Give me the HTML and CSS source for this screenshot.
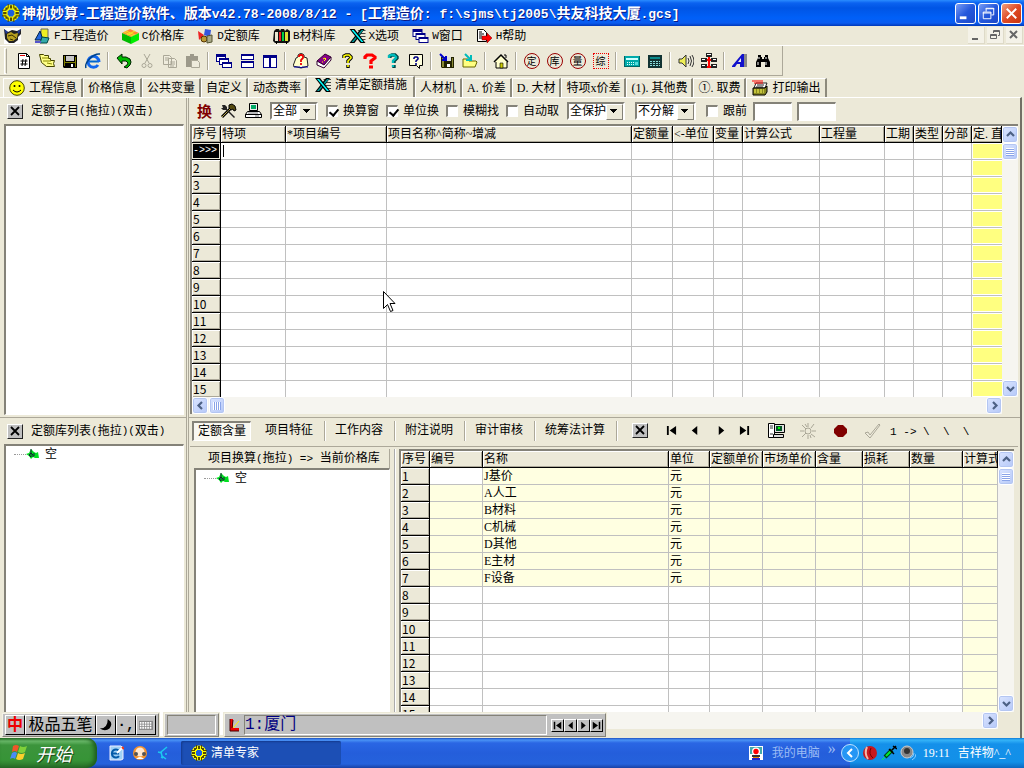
FILE: index.html
```html
<!DOCTYPE html>
<html lang="zh-CN">
<head>
<meta charset="utf-8">
<title>神机妙算-工程造价软件</title>
<link rel="stylesheet" href="styles.css">
</head>
<body>
<svg class="defs" aria-hidden="true">
  <symbol id="logo" viewBox="0 0 16 16"><circle cx="8" cy="8" r="7.500" fill="#ff0"/><path d="M5 0h1v4h-1zM10 0h1v4h-1zM5 12h1v4h-1zM10 12h1v4h-1zM0 5h4v1H0zM0 10h4v1H0zM12 5h4v1h-4zM12 10h4v1h-4zM7 1h2v3H7zM7 12h2v3H7zM1 7h3v2H1zM12 7h3v2h-3zM3 3h2v2H3zM11 3h2v2h-2zM3 11h2v2H3zM11 11h2v2h-2z" fill="#554b00"/><path d="M6 5h4v1h1v4h-1v1H6v-1H5V6h1z" fill="#1a5fe0"/></symbol>
  <symbol id="excel" viewBox="0 0 16 16"><path d="M8 2h8v1H9zM10 5h6v1h-6zM9 8h7v1H9zM10 11h6v1h-6z" fill="#444"/><path d="M11 1h4L5 15H0z" fill="#000"/><path d="M12 2h2L4 14H2z" fill="#099"/><path d="M0 1h5l11 14h-5z" fill="#000"/><path d="M2 2h2l10 12h-2z" fill="#0ff"/></symbol>
  <symbol id="cascade" viewBox="0 0 16 16"><path d="M0 1h10v8H0z" fill="#008"/><path d="M1 4h8v4H1z" fill="#fff"/><path d="M3 5h10v7H3z" fill="#008"/><path d="M4 7h8v4H4z" fill="#fff"/><path d="M6 9h10v6H6z" fill="#008"/><path d="M7 11h8v3H7z" fill="#fff"/></symbol>
  <symbol id="disk" viewBox="0 0 16 16"><path d="M1 2h14v13H2l-1-1z" fill="#000"/><path d="M2 3h1v10H2zM13 4h1v10h-1zM3 9h10v1H3z" fill="#808000"/><path d="M4 3h8v5H4z" fill="#c8c8c8"/><path d="M9 11h2v3H9z" fill="#fff"/></symbol>
  <symbol id="up" viewBox="0 0 9 9"><path d="M1 6l3.500-3.500L8 6" fill="none" stroke="#4d6185" stroke-width="2.200"/></symbol>
  <symbol id="tree" viewBox="0 0 13 10"><path d="M0 5l3-1 2-4 3 3 2 1 2-1 1 6H9L7 8 5 10 3 7z" fill="#00e020"/><path d="M5 0v4L3 6l2 2V4l2 2v2M8 4v3" stroke="#123" fill="none"/></symbol>
  <symbol id="prev" viewBox="0 0 12 12"><path d="M9 1v10L3 6z"/></symbol>
  <symbol id="first" viewBox="0 0 12 12"><path d="M1 1h2v10H1zM11 1v10L4 6z"/></symbol>
  <symbol id="cross" viewBox="0 0 12 11"><path d="M2 1l8 8M10 1L2 9" stroke="#000" stroke-width="1.800"/></symbol>
</svg>

<header class="titlebar">
  <svg class="i18"><use href="#logo"/></svg>
  <h1>神机妙算<span>-</span>工程造价软件、版本<span>v42.78-2008/8/12 - [</span>工程造价<span>: f:\sjms\tj2005\</span>共友科技大厦<span>.gcs]</span></h1>
  <button class="win" aria-label="最小化"><svg viewBox="0 0 20 20"><path d="M4 13h7v3H4z" fill="#fff"/></svg></button>
  <button class="win" aria-label="还原"><svg viewBox="0 0 20 20" fill="none" stroke="#fff"><path d="M7.500 8V4.500h8v7H13M7 5h9M4.500 8.500h8v7h-8zM4 9.500h9"/></svg></button>
  <button class="win close" aria-label="关闭"><svg viewBox="0 0 20 20"><path d="M5 5l10 10M15 5L5 15" stroke="#fff" stroke-width="2"/></svg></button>
</header>

<nav class="menubar">
  <svg class="i17" viewBox="0 0 17 16"><path d="M0 0h17v16H0z" fill="#fff"/><path d="M0 1l4 3 4-2 5 1 4-2v5l-3 3v3l-4 3H5l-4-4z" fill="#222"/><path d="M3 6l4-2 3 2 4-1-1 5-4 3H5l-2-3z" fill="#b8a020"/><path d="M4 8l4-1 4 3M6 11l3 1" stroke="#332b00" fill="none"/><path d="M0 1l4 3-2 2zM17 1l-4 3 2 2z" fill="#223a9a"/></svg>
  <button><svg class="i17" viewBox="0 0 17 16"><path d="M7 1h7v9H7z" fill="#ee2" stroke="#666"/><path d="M1 12L6 3l3 9z" fill="#26d" stroke="#024"/><path d="M8 9l7 1-2 5H6z" fill="#3aa" stroke="#044"/><path d="M1 13h6v2H1z" fill="#55c"/></svg><span class="l">F</span>工程造价</button>
  <button><svg class="i17" viewBox="0 0 17 16"><path d="M0 5l8-4 9 4-8 4z" fill="#f83"/><path d="M4 3l9 4M2 4l9 4M13 3L5 7" stroke="#ee2"/><path d="M0 5l9 4v7l-9-4z" fill="#0b0"/><path d="M17 5L9 9v7l8-4z" fill="#0e0"/></svg><span class="l">C</span>价格库</button>
  <button><svg class="i17" viewBox="0 0 17 16"><path d="M1 3l6 4-5 5z" fill="#e22"/><path d="M8 1l6 1-1 7-6-2z" fill="#35d"/><circle cx="7" cy="11" r="3" fill="#b93" stroke="#530"/><path d="M10 8l5-1v7l-5 1z" fill="#aa8" stroke="#553"/></svg><span class="l">D</span>定额库</button>
  <button><svg class="i17" viewBox="0 0 17 16"><path d="M1 3l2-2h3l1 2 1-2h3l1 2 2-2 3 2v10l-2 2H2l-2-2z" fill="#111"/><path d="M2 4h3v9H2z" fill="#e8e8d0"/><path d="M6 4h2v9H6z" fill="#e22"/><path d="M9 4h2v9H9z" fill="#0c4"/><path d="M12 4h3v9h-3z" fill="#dd3"/><path d="M3 13h1v3H3zM13 13h1v3h-1z"/></svg><span class="l">B</span>材料库</button>
  <button><svg class="i17"><use href="#excel"/></svg><span class="l">X</span>选项</button>
  <button><svg class="i17"><use href="#cascade"/></svg><span class="l">W</span>窗口</button>
  <button><svg class="i17" viewBox="0 0 17 16"><path d="M1.500 1.500h6l3 3v9h-9z" fill="#fff" stroke="#000"/><path d="M3 4h3M3 6h5M3 8h3M3 10h3" stroke="#000"/><path d="M6 8h5V5l5 5-5 5v-3H6z" fill="#f00" stroke="#700" stroke-width=".5"/></svg><span class="l">H</span>帮助</button>
  <span class="grow"></span>
  <button class="mdi" aria-label="最小化子窗口"><svg viewBox="0 0 16 16"><path d="M4 11h6v2H4z" fill="#666"/></svg></button>
  <button class="mdi" aria-label="还原子窗口"><svg viewBox="0 0 16 16" fill="none" stroke="#666"><path d="M6.500 6V3.500h6v5H11M6 4.500h7M3.500 7.500h6v4h-6zM3 8.500h7"/></svg></button>
  <button class="mdi" aria-label="关闭子窗口"><svg viewBox="0 0 16 16"><path d="M4 4l7 7M11 4l-7 7" stroke="#666" stroke-width="2"/></svg></button>
</nav>

<div class="toolrow"><div class="toolbar" role="toolbar">
  <span class="grip"></span>
  <button aria-label="新建"><svg viewBox="0 0 16 16"><path d="M2.500.5h8l3 3v12h-11z" fill="#fff" stroke="#000"/><path d="M10.500.5v3h3" fill="none" stroke="#000"/><path d="M4 2.500h5" stroke="#d00"/><path d="M7 6L6 13M10 6L9 13M4.500 8h7M4.500 11h7" stroke="#000"/></svg></button>
  <button aria-label="打开"><svg viewBox="0 0 16 16"><path d="M.5 1.500h4l1 1h4v3h2v2h4l-1 3 1 3h-8l-5-4z" fill="#ff8" stroke="#440"/><path d="M3 5h7M4 8h8M8 10l5 1" stroke="#880" fill="none"/></svg></button>
  <button aria-label="保存"><svg><use href="#disk"/></svg></button>
  <button aria-label="浏览"><svg viewBox="0 0 16 16"><path d="M14 8.500H4" stroke="#06c" stroke-width="2"/><path d="M14 9A5.500 5.500 0 1 0 13 12" fill="none" stroke="#16e" stroke-width="3"/><path d="M1 15C-1 10 8 0 15 1" fill="none" stroke="#048" stroke-width="1.500"/></svg></button>
  <i class="sep"></i>
  <button aria-label="撤销"><svg viewBox="0 0 16 16"><path d="M1 5l5-4v3h4l4 2 1 3-1 3-3 3-3-1 3-2 1-2-2-2H6v3z" fill="#0b0" stroke="#020"/></svg></button>
  <button aria-label="剪切"><svg viewBox="0 0 16 16" fill="none" stroke="#aaa797"><path d="M5 1l5 9M11 1L6 10"/><circle cx="5" cy="12.500" r="2"/><circle cx="11" cy="12.500" r="2"/></svg></button>
  <button aria-label="复制"><svg viewBox="0 0 16 16" fill="#efecdd" stroke="#aaa797"><path d="M1.500 2.500h6l2 2v7h-8zM6.500 5.500h6l2 2v7h-8z"/><path d="M3 5h4M3 7h3M8 9h5M8 11h5M8 13h4"/></svg></button>
  <button aria-label="粘贴"><svg viewBox="0 0 16 16"><path d="M1 3h4V1h4v2h4v11H1z" fill="#9c998a"/><path d="M6.500 7.500h6l2 2v5h-8z" fill="#eeebdc" stroke="#aaa797"/></svg></button>
  <i class="sep"></i>
  <button aria-label="层叠"><svg><use href="#cascade"/></svg></button>
  <button aria-label="横向平铺"><svg viewBox="0 0 16 16"><path d="M2 1h13v6H2zM2 8h13v7H2z" fill="#008"/><path d="M3 3h11v3H3zM3 10h11v4H3z" fill="#fff"/></svg></button>
  <button aria-label="纵向平铺"><svg viewBox="0 0 16 16"><path d="M1 2h14v13H1z" fill="#008"/><path d="M2 5h5v9H2zM9 5h5v9H9z" fill="#fff"/></svg></button>
  <i class="sep"></i>
  <button aria-label="帮助目录"><svg viewBox="0 0 16 16"><path d="M3 5l2-1v-2l3-2 3 2v2l3 1 1 8-3 1-4 1-4-1-4-1z" fill="#ffc" stroke="#222"/><path d="M6 4V3l1-1h2l1 1v2L8 7v2M8 10v2" fill="none" stroke="#e00" stroke-width="1.800"/><path d="M1 14h6l1 1 1-1h6" stroke="#00a" fill="none"/></svg></button>
  <button aria-label="手册"><svg viewBox="0 0 16 16"><path d="M1 8l8-7 6 3-7 8z" fill="#808" stroke="#303"/><path d="M1 8v4l7 3 7-8V4l-7 8z" fill="#fff" stroke="#303"/><path d="M7 6l2-1 1 1-2 2M6 9h1" stroke="#ff0" fill="none"/></svg></button>
  <button aria-label="提示"><svg viewBox="0 0 16 16" fill="none"><path d="M5 5V3l2-1h3l2 2v1L9 8v2M9 12v3" stroke="#000" stroke-width="3.400"/><path d="M5 5V3l2-1h3l2 2v1L9 8v2M9 12v2" stroke="#ff0" stroke-width="1.600"/></svg></button>
  <button aria-label="问答"><svg viewBox="0 0 16 16" fill="none" stroke="#f00"><path d="M3 6V4l2-2h5l3 2v1l-4 3v3" stroke-width="3.200"/><path d="M7 14h4" stroke-width="3"/></svg></button>
  <button aria-label="在线帮助"><svg viewBox="0 0 16 16" fill="none"><path d="M5 5V3l2-1h3l2 2v1L9 8v2M9 12v3" stroke="#044" stroke-width="3.400"/><path d="M4 5V3l2-1h3l2 2v1L8 8v2M8 12v2" stroke="#0bb" stroke-width="2.400"/></svg></button>
  <button aria-label="这是什么"><svg viewBox="0 0 16 16"><path d="M1.500 1.500h13v11h-3v3l-3-3h-7z" fill="#ffd" stroke="#000"/><path d="M6 6V5l1-1h2l1 1v1L8 8v1M8 10v2" fill="none" stroke="#008" stroke-width="1.600"/></svg></button>
  <i class="sep"></i>
  <button aria-label="存盘"><svg viewBox="0 0 16 16"><path d="M2 4h13v11H3l-1-1z" fill="#222200"/><path d="M3 5h2v9H3zM13 5h1v9h-1z" fill="#883"/><path d="M6 4h6v4H6z" fill="#ddd"/><path d="M8 11h3v3H8z" fill="#fff"/><path d="M1 1l5 5M7 3v4H3" stroke="#00c" stroke-width="2" fill="none"/></svg></button>
  <button aria-label="读入"><svg viewBox="0 0 16 16"><path d="M1 6h5l1 2h7l1 1-2 5H1z" fill="#ffff80" stroke="#660"/><path d="M3 1l5 5M9 2v5H4" stroke="#0bb" stroke-width="2" fill="none"/></svg></button>
  <i class="sep"></i>
  <button aria-label="主页"><svg viewBox="0 0 16 16"><path d="M3 8v7h11V8" fill="#ffc" stroke="#000"/><path d="M1 9l7-7 7 7" fill="#ffc" stroke="#000" stroke-width="1.500"/><path d="M11 2h2v3" stroke="#000" fill="none"/><path d="M7 10h3v5H7z" fill="#cc0" stroke="#000" stroke-width=".6"/></svg></button>
  <i class="sep"></i>
  <button><b class="seal">定</b></button>
  <button><b class="seal">库</b></button>
  <button><b class="seal">量</b></button>
  <button><b class="seal dotted">综</b></button>
  <i class="sep"></i>
  <button aria-label="卡片"><svg viewBox="0 0 16 16"><path d="M0 3h16v11H0z" fill="#066"/><path d="M1 3h14v10H1z" fill="#0aa"/><path d="M2 5h12v2H2z" fill="#cff"/><path d="M3 9.500h7M3 11.500h7" stroke="#dff" stroke-dasharray="1 1"/><path d="M11 9h3v3h-3z" fill="#5dd"/></svg></button>
  <button aria-label="计算器"><svg viewBox="0 0 16 16"><path d="M1 2h14v13H1z" fill="#133"/><path d="M3 4h10v2H3z" fill="#0a8a8a"/><path d="M3 8.500h10M3 10.500h10M3 12.500h10" stroke="#8dd" stroke-dasharray="2 1"/></svg></button>
  <i class="sep"></i>
  <button aria-label="声音"><svg viewBox="0 0 16 16"><path d="M1 6h3l4-4v12l-4-4H1z" fill="#ee5" stroke="#333"/><path d="M10 5q2 3 0 6M12 3q3 5 0 10M14 2q4 6 0 12" fill="none" stroke="#333"/></svg></button>
  <button aria-label="网络"><svg viewBox="0 0 16 16"><path d="M5 0h6v4H5zM0 5h6v4H0zM10 5h6v4h-6zM0 11h6v4H0zM10 11h6v4h-6z" fill="#222"/><path d="M6 1h4v1H6zM1 6h3v1H1zM12 6h3v1h-3zM1 12h3v1H1zM12 12h3v1h-3z" fill="#fff"/><path d="M8 4v11M6 7h4M6 14h4" stroke="#f00" stroke-width="2"/></svg></button>
  <i class="sep"></i>
  <button aria-label="字体"><svg viewBox="0 0 16 16"><path d="M12 1h3v13h-3z" fill="#888"/><path d="M10 1h2v13H8v-3H5l-2 3H0v-1z" fill="#11c"/><path d="M9 5v4H6z" fill="#eee"/></svg></button>
  <button aria-label="查找"><svg viewBox="0 0 16 16"><path d="M3 2h3v2h1v2h2V4h1V2h3v3l2 4v5h-5V9H6v5H1V9l2-4z"/><path d="M3 9v3M11 9v3M4 4v2M11 4v2" stroke="#fff"/></svg></button>
</div></div>

<nav class="tabs">
  <button><svg class="i16" viewBox="0 0 16 16"><circle cx="8" cy="8" r="7.300" fill="#ff0" stroke="#440"/><circle cx="5.500" cy="6" r="1"/><circle cx="10.500" cy="6" r="1"/><path d="M4 10q4 4 8 0" fill="none" stroke="#000"/></svg>工程信息</button>
  <button>价格信息</button>
  <button>公共变量</button>
  <button>自定义</button>
  <button>动态费率</button>
  <button class="on"><svg class="i16"><use href="#excel"/></svg>清单定额措施</button>
  <button>人材机</button>
  <button>A. 价差</button>
  <button>D. 大材</button>
  <button>特项x价差</button>
  <button>(1). 其他费</button>
  <button>①. 取费</button>
  <button><svg class="i16" viewBox="0 0 16 16"><path d="M4 3h11l-2 5H2z" fill="#fff" stroke="#222"/><path d="M0 1h11M2 3h9" stroke="#f00"/><path d="M5 5h7M4 7h7" stroke="#222"/><path d="M1 8h12l2-2v6l-2 3H1z" fill="#882" stroke="#000"/><path d="M2 10h10M2 12h10" stroke="#ff5" stroke-dasharray="2 1"/></svg>打印输出</button>
</nav>

<main class="work">
  <section class="side top">
    <div class="cap"><button class="x" aria-label="关闭"><svg><use href="#cross"/></svg></button>定额子目<span class="l">(</span>拖拉<span class="l">)(</span>双击<span class="l">)</span></div>
    <div class="box"></div>
  </section>

  <section class="content top">
    <form class="opts">
      <b class="swap">换</b>
      <svg class="i17" viewBox="0 0 17 16"><path d="M9 2l3-1 3 2 1 4-2 1-1-2-2 1-2-2z" fill="#554a10" stroke="#000"/><path d="M10 6L2 14" stroke="#000" stroke-width="3"/><path d="M10 6L2 14" stroke="#b9a84a"/><path d="M2 2l3 0 2 2v2l8 8-1 1-8-8H3L1 5l2 0z" fill="#222"/></svg>
      <svg class="i17" viewBox="0 0 17 16"><path d="M4.500.5h8v7h-8z" fill="#eee" stroke="#000"/><path d="M6 2h5v4H6z" fill="#0a6"/><path d="M2.500 8.500h12l2 3h-16zM.5 11.500h16v3H.5z" fill="#fff" stroke="#000"/><path d="M3 10h10M10 13h4" stroke="#777"/></svg>
      <span class="combo c1"><select aria-label="范围"><option>全部</option></select></span>
      <label><input type="checkbox" checked>换算窗</label>
      <label><input type="checkbox" checked>单位换</label>
      <label><input type="checkbox">模糊找</label>
      <label><input type="checkbox">自动取</label>
      <span class="combo c2"><select aria-label="保护"><option>全保护</option></select></span>
      <span class="combo c2"><select aria-label="分解"><option>不分解</option></select></span>
      <label><input type="checkbox">跟前</label>
      <input class="txt" type="text" aria-label="起"><input class="txt" type="text" aria-label="止">
    </form>
    <div class="grid">
      <div class="view">
        <table class="t1">
          <colgroup><col class="w29"><col class="w65"><col class="w101"><col><col class="w41"><col class="w41"><col class="w29"><col class="w77"><col class="w65"><col class="w29"><col class="w29"><col class="w29"><col class="w30"></colgroup>
          <thead><tr><th>序号<th>特项<th>*项目编号<th>项目名称^简称~增减<th>定额量<th>&lt;-单位<th>变量<th>计算公式<th>工程量<th>工期<th>类型<th>分部<th>定. 直</tr></thead>
          <tbody>
          <tr><th class="cur">-&gt;&gt;&gt;<td class="caret"><td><td><td><td><td><td><td><td><td><td><td></tr>
          <tr><th>2<td><td><td><td><td><td><td><td><td><td><td><td></tr>
          <tr><th>3<td><td><td><td><td><td><td><td><td><td><td><td></tr>
          <tr><th>4<td><td><td><td><td><td><td><td><td><td><td><td></tr>
          <tr><th>5<td><td><td><td><td><td><td><td><td><td><td><td></tr>
          <tr><th>6<td><td><td><td><td><td><td><td><td><td><td><td></tr>
          <tr><th>7<td><td><td><td><td><td><td><td><td><td><td><td></tr>
          <tr><th>8<td><td><td><td><td><td><td><td><td><td><td><td></tr>
          <tr><th>9<td><td><td><td><td><td><td><td><td><td><td><td></tr>
          <tr><th>10<td><td><td><td><td><td><td><td><td><td><td><td></tr>
          <tr><th>11<td><td><td><td><td><td><td><td><td><td><td><td></tr>
          <tr><th>12<td><td><td><td><td><td><td><td><td><td><td><td></tr>
          <tr><th>13<td><td><td><td><td><td><td><td><td><td><td><td></tr>
          <tr><th>14<td><td><td><td><td><td><td><td><td><td><td><td></tr>
          <tr><th>15<td><td><td><td><td><td><td><td><td><td><td><td></tr>
          </tbody>
        </table>
      </div>
      <div class="vbar"><button aria-label="上"><svg><use href="#up"/></svg></button><i class="thumb"></i><button class="end down" aria-label="下"><svg><use href="#up"/></svg></button></div>
      <div class="hbar"><button class="left" aria-label="左"><svg><use href="#up"/></svg></button><i class="thumb"></i><button class="end right" aria-label="右"><svg><use href="#up"/></svg></button></div>
    </div>
  </section>

  <section class="side">
    <div class="cap"><button class="x" aria-label="关闭"><svg><use href="#cross"/></svg></button>定额库列表<span class="l">(</span>拖拉<span class="l">)(</span>双击<span class="l">)</span></div>
    <div class="box"><div class="node"><svg><use href="#tree"/></svg>空</div></div>
  </section>

  <section class="content">
    <div class="subtabs">
      <button class="on">定额含量</button><button>项目特征</button><button>工作内容</button><button>附注说明</button><button>审计审核</button><button>统筹法计算</button>
      <div class="nav">
        <button class="x" aria-label="关闭"><svg><use href="#cross"/></svg></button>
        <button class="n n1" aria-label="首条"><svg><use href="#first"/></svg></button>
        <button class="n" aria-label="上一条"><svg><use href="#prev"/></svg></button>
        <button class="n n2 flip" aria-label="下一条"><svg><use href="#prev"/></svg></button>
        <button class="n flip" aria-label="末条"><svg><use href="#first"/></svg></button>
      </div>
      <div class="nav tools">
        <svg class="i17" viewBox="0 0 17 16"><path d="M.5.500h6v14h-6z" fill="#fff" stroke="#000"/><path d="M2 3h3M2 5h3M2 11h3" stroke="#333"/><path d="M6.500 1.500h10v8h-10zM5.500 11.500h10v3h-10z" fill="#ddd" stroke="#000"/><path d="M8 3h6v5H8z" fill="#052"/><path d="M10 4h2v2h-2z" fill="#0f0"/></svg>
        <svg class="i17" viewBox="0 0 17 16" fill="none" stroke="#aaa797"><circle cx="8" cy="8" r="3"/><path d="M8 0v4M8 12v4M0 8h4M12 8h4M2 2l4 4M11 11l4 3M2 14l4-4M11 5l3-4M5 1l2 3M10 12l1 3"/></svg>
        <svg class="i17" viewBox="0 0 17 16"><path d="M6 2h5l4 4v4l-4 4H6l-4-4V6z" fill="#800000"/></svg>
        <svg class="i17" viewBox="0 0 17 16"><path d="M1 10l3-1 2 3 9-11 1 1L6 15z" fill="#eeebdc" stroke="#aaa797"/></svg>
      </div>
      <pre>1 -&gt; \  \  \</pre>
    </div>
    <div class="lower">
      <div class="convert">
        <div class="chead">项目换算<span class="l">(</span>拖拉<span class="l">) =&gt; </span>当前价格库</div>
        <div class="box"><div class="node"><svg><use href="#tree"/></svg>空</div></div>
      </div>
      <div class="grid">
        <div class="view">
          <table class="t2">
            <colgroup><col class="w29"><col class="w53"><col><col class="w41"><col class="w53"><col class="w53"><col class="w47"><col class="w47"><col class="w53"><col class="w35"></colgroup>
            <thead><tr><th>序号<th>编号<th>名称<th>单位<th>定额单价<th>市场单价<th>含量<th>损耗<th>数量<th>计算式</tr></thead>
            <tbody>
            <tr class="y"><th>1<td class="w"><td>J基价<td>元<td><td><td><td><td><td></tr>
            <tr class="y"><th>2<td><td>A人工<td>元<td><td><td><td><td><td></tr>
            <tr class="y"><th>3<td><td>B材料<td>元<td><td><td><td><td><td></tr>
            <tr class="y"><th>4<td><td>C机械<td>元<td><td><td><td><td><td></tr>
            <tr class="y"><th>5<td><td>D其他<td>元<td><td><td><td><td><td></tr>
            <tr class="y"><th>6<td><td>E主材<td>元<td><td><td><td><td><td></tr>
            <tr class="y"><th>7<td><td>F设备<td>元<td><td><td><td><td><td></tr>
            <tr><th>8<td><td><td><td><td><td><td><td><td></tr>
            <tr><th>9<td><td><td><td><td><td><td><td><td></tr>
            <tr><th>10<td><td><td><td><td><td><td><td><td></tr>
            <tr><th>11<td><td><td><td><td><td><td><td><td></tr>
            <tr><th>12<td><td><td><td><td><td><td><td><td></tr>
            <tr><th>13<td><td><td><td><td><td><td><td><td></tr>
            <tr><th>14<td><td><td><td><td><td><td><td><td></tr>
            <tr><th>15<td><td><td><td><td><td><td><td><td></tr>
            </tbody>
          </table>
        </div>
        <div class="vbar"><button aria-label="上"><svg><use href="#up"/></svg></button><i class="thumb"></i><button class="end down" aria-label="下"><svg><use href="#up"/></svg></button></div>
        <div class="hbar"><button class="left" aria-label="左"><svg><use href="#up"/></svg></button><button class="end right" aria-label="右"><svg><use href="#up"/></svg></button></div>
      </div>
    </div>
  </section>
</main>

<div class="floats">
  <div class="bar ime">
    <button class="red">中</button><button class="name">极品五笔</button>
    <button aria-label="半角"><svg viewBox="0 0 16 16"><path d="M10 1q7 5 2 11-5 4-11 0 9 0 9-11z"/></svg></button>
    <button class="dots">·,</button>
    <button aria-label="软键盘"><svg viewBox="0 0 17 16"><path d="M0 3h17v11H0z" fill="#888"/><path d="M1 5.500h15M1 8.500h15M1 11.500h15" stroke="#fff" stroke-width="2" stroke-dasharray="2 1"/></svg></button>
  </div>
  <div class="bar blank"><span class="sunk"></span></div>
  <div class="bar place">
    <svg class="i17" viewBox="0 0 17 16"><path d="M3 2h3v9h6v3H3z" fill="#e00"/><path d="M3 2v12h9M6 3l-1 8" stroke="#400" fill="none"/><path d="M6 11l6-7" stroke="#fe0"/></svg>
    <span class="sunk">1:厦门</span>
    <button aria-label="首个"><svg><use href="#first"/></svg></button><button aria-label="上一个"><svg><use href="#prev"/></svg></button><button class="flip" aria-label="下一个"><svg><use href="#prev"/></svg></button><button class="flip" aria-label="末个"><svg><use href="#first"/></svg></button>
  </div>
</div>

<svg class="pointer" viewBox="0 0 13 22"><path d="M.5.500v17l4-4 3 7 2.500-1-3-7h5z" fill="#fff" stroke="#000"/></svg>

<footer class="taskbar">
  <button class="start"><svg viewBox="0 0 20 18"><path d="M3 2q3-2 6 0L7 8Q5 6 2 8z" fill="#f0562a"/><path d="M10 2q3 2 7 0l-2 6q-3 2-7 0z" fill="#7fd03a"/><path d="M2 9q3-2 5 0l-2 6q-2-2-5 0z" fill="#4a8cf5"/><path d="M8 9q3 2 7 0l-2 6q-4 2-7 0z" fill="#fbd02c"/></svg>开始</button>
  <div class="quick">
    <svg class="i16" viewBox="0 0 16 16"><path d="M2 1h11l2 2v11l-2 1H2z" fill="#9fd0f5" stroke="#eef"/><path d="M11 6a4 4 0 1 0 0 5M4 8.500h7" fill="none" stroke="#035aa8" stroke-width="2"/><path d="M9 8l6-6" stroke="#fff" stroke-width="2"/><path d="M14 2l2 2" stroke="#e31" stroke-width="2"/></svg>
    <svg class="i16" viewBox="0 0 16 16"><circle cx="8" cy="8" r="7" fill="#f5932c"/><circle cx="8" cy="7" r="4.500" fill="#ffe8d0"/><circle cx="4" cy="9" r="2" fill="#555"/><circle cx="12" cy="9" r="2" fill="#555"/><path d="M4 14q4-4 8 0z" fill="#fff"/></svg>
    <svg class="i16" viewBox="0 0 16 16"><path d="M11 2L5 7l1 4 4 3M2 7l4 1M9 9h2M5 12l2 1" fill="none" stroke="#1cc8f0" stroke-width="1.500"/></svg>
  </div>
  <button class="task"><svg class="i16"><use href="#logo"/></svg>清单专家</button>
  <span class="grow"></span>
  <div class="desk"><svg class="i16" viewBox="0 0 16 16"><path d="M1 1h14v14H1z" fill="#fff"/><path d="M2 2h12v7H2z" fill="#4aa"/><circle cx="8" cy="6.500" r="4" fill="#fff"/><circle cx="8" cy="6.500" r="2.700" fill="#f00"/><path d="M4 10h8v2H4z" fill="#333"/><path d="M5 12h6v1H5z" fill="#e80"/><path d="M4 13h8v2H4z" fill="#22c"/></svg><span>我的电脑</span><i>»</i></div>
  <div class="tray">
    <button class="hide" aria-label="隐藏图标"><svg viewBox="0 0 18 18"><circle cx="9" cy="9" r="8.500" fill="#2496f5" stroke="#bfe2ff"/><path d="M11 5L7 9l4 4" fill="none" stroke="#fff" stroke-width="2"/></svg></button>
    <svg class="i16" viewBox="0 0 16 16"><circle cx="8" cy="8" r="7" fill="#c8171e"/><path d="M5 2q-3 6 1 12" stroke="#f3b8a8" fill="none" stroke-width="2"/><path d="M9 3q-3 6 2 10" stroke="#700" fill="none"/></svg>
    <svg class="i16" viewBox="0 0 16 16"><path d="M1 15l4-4" stroke="#0f4"/><path d="M4 12l7-7" stroke="#041" stroke-width="4"/><path d="M5 11l5-5" stroke="#0e3" stroke-width="2"/><path d="M11 5l4-4M8 4l5 5M12 1l4 3" stroke="#000" stroke-width="1.500"/></svg>
    <svg class="i16" viewBox="0 0 16 16"><circle cx="7" cy="7" r="6" fill="#888" stroke="#ccc"/><circle cx="7" cy="6" r="3" fill="#333"/><path d="M10 13q4-1 4-5M12 15q4-2 4-6" stroke="#8cf" fill="none"/></svg>
    <time>19:11</time><span>吉祥物^_^</span>
  </div>
</footer>
</body>
</html>
```

FILE: styles.css
```css
* { box-sizing: border-box; }
body {
  margin: 0;
  height: 100vh;
  display: flex;
  flex-direction: column;
  overflow: hidden;
  position: relative;
  background: #ece9d8;
  color: #000;
  font: 12px/16px "Liberation Serif", "Noto Sans CJK SC", sans-serif;
  white-space: nowrap;
}
button, select, input { font: inherit; color: inherit; margin: 0; padding: 0; border: 0; background: none; border-radius: 0; }
svg { display: block; flex: none; }
.defs { width: 0; height: 0; position: absolute; }
.i16 { width: 16px; height: 16px; }
.i17 { width: 17px; height: 16px; }
.i18 { width: 18px; height: 18px; }
.grow { flex: 1; }
.l { font: 11px/14px "Liberation Mono", monospace; white-space: pre; }
.flip svg { transform: scaleX(-1); }

/* title bar */
.titlebar {
  flex: none;
  height: 26px;
  display: flex;
  align-items: center;
  gap: 2px;
  padding: 0 2px;
  background: linear-gradient(#2a8cff 0, #0b62f0 3px, #0055e5 8px, #0060f8 18px, #0a5cf0 23px, #0138b8 26px);
  color: #fff;
}
.titlebar h1 { flex: 1; margin: 0; font: bold 14px/20px "Noto Sans CJK SC", sans-serif; text-shadow: 1px 1px #0a1883; }
.titlebar h1 span { font: bold 13px/20px "Liberation Mono", monospace; white-space: pre; }
.win { width: 21px; height: 21px; border: 1px solid #fff; border-radius: 3px; background: linear-gradient(135deg, #7a9df5, #2458dc 50%, #1c48c8); }
.win svg { width: 19px; height: 19px; }
.win.close { background: linear-gradient(135deg, #f0a080, #df4a25 50%, #c83510); }

/* menu */
.menubar { flex: none; height: 20px; display: flex; align-items: center; gap: 13px; padding: 0 1px 0 4px; border-bottom: 1px solid #fff; }
.menubar button { display: flex; align-items: center; }
.menubar button .i17 { margin-right: 3px; }
.menubar .mdi { width: 17px; height: 17px; background: #f4f2e8; border-right: 1px solid #dedac8; border-bottom: 1px solid #dedac8; }
.mdi + .mdi { margin-left: -11px; }
.mdi svg { width: 16px; height: 16px; }

/* toolbar */
.toolrow { flex: none; display: flex; height: 30px; }
.toolbar { display: flex; align-items: center; padding: 0 8px 0 4px; border-right: 1px solid #aca899; border-bottom: 1px solid #aca899; }
.grip { width: 3px; height: 26px; margin-right: 5px; border: 1px solid #fff; border-right-color: #aca899; }
.toolbar button { width: 23px; height: 24px; display: flex; align-items: center; justify-content: center; }
.toolbar svg { width: 16px; height: 16px; }
.sep { width: 2px; height: 18px; margin: 0 3px; border-left: 1px solid #aca899; border-right: 1px solid #fff; }
.seal { width: 16px; height: 16px; border: 1px solid #900; border-radius: 8px; font: 10px/14px "Noto Sans CJK SC", sans-serif; text-align: center; }
.seal.dotted { border: 1px dotted #e00; border-radius: 0; }

/* page tabs */
.tabs { flex: none; height: 21px; display: flex; align-items: flex-end; padding-left: 3px; }
.tabs button { height: 19px; padding: 0 4px; display: flex; align-items: center; gap: 4px; border-top: 1px solid #fff; border-left: 1px solid #fff; border-right: 2px solid #8d8a7c; white-space: pre; }
.tabs .on { height: 21px; padding: 0 6px 4px; }
.tabs svg { margin-left: 1px; }

/* work area */
.work {
  flex: 1;
  min-height: 0;
  display: grid;
  grid-template-columns: 187px minmax(0, 1fr);
  grid-template-rows: 320px minmax(0, 1fr);
  border-top: 1px solid #fff;
  margin-right: 2px;
  border-right: 2px solid #716f64;
}
.side { display: flex; flex-direction: column; min-height: 0; padding: 0 2px 2px 4px; border-right: 1px solid #aca899; }
.content { display: flex; flex-direction: column; min-height: 0; padding: 0 2px 3px 1px; margin-left: 1px; border-left: 1px solid #aca899; }
.side.top, .content.top { border-bottom: 1px solid #aca899; }
.cap { height: 26px; flex: none; display: flex; align-items: center; padding-left: 3px; }
.x { width: 16px; height: 15px; margin-right: 8px; background: #c0c0c0; border: 1px solid #fff; border-right-color: #222; border-bottom-color: #222; display: flex; align-items: center; justify-content: center; }
.x svg { width: 12px; height: 11px; }
.box { flex: 1; min-height: 0; background: #fff; border: 1px solid #fff; border-top: 2px solid #848278; border-left: 2px solid #848278; }
.node { display: flex; align-items: center; padding-left: 8px; }
.node::before { content: ""; width: 12px; border-top: 1px dotted #999; }
.node svg { width: 13px; height: 10px; margin-right: 6px; }

/* options */
.opts { height: 26px; flex: none; display: flex; align-items: center; padding-left: 7px; }
.swap { color: #800000; font: bold 15px/18px "Noto Sans CJK SC", sans-serif; }
.opts .i17 { margin-left: 8px; }
.combo { display: flex; position: relative; height: 18px; border: 2px solid #fff; border-top-color: #848278; border-left-color: #848278; background: #fff; }
.combo select { width: 100%; appearance: none; padding-left: 1px; line-height: 14px; outline: 0; }
.combo::after { content: ""; position: absolute; right: 0; top: 0; width: 15px; height: 14px; border: 1px solid #fff; border-right-color: #848278; border-bottom-color: #848278; background: linear-gradient(#000, #000) 3px 4px / 7px 1px no-repeat, linear-gradient(#000, #000) 4px 5px / 5px 1px no-repeat, linear-gradient(#000, #000) 5px 6px / 3px 1px no-repeat, linear-gradient(#000, #000) 6px 7px / 1px 1px no-repeat, #ece9d8; }
.c1 { width: 48px; margin-left: 8px; }
.c2 { width: 58px; margin-left: 8px; }
.c2 + .c2 { width: 61px; margin-left: 10px; }
.opts label { display: flex; align-items: center; gap: 5px; margin-left: 7px; }
.opts .c1 + label { margin-left: 8px; }
.opts .c2 + label { margin-left: 10px; }
.opts [type=checkbox] { appearance: none; width: 12px; height: 12px; background: #fff; border: 1px solid #fff; border-top: 2px solid #848278; border-left: 2px solid #848278; position: relative; }
.opts [type=checkbox]:checked::after { content: ""; position: absolute; left: 3px; top: 0; width: 4px; height: 7px; border: solid #000; border-width: 0 2px 2px 0; transform: rotate(40deg); }
.txt { width: 39px; height: 19px; margin-left: 6px; background: #fff; border: 1px solid #fff; border-top: 2px solid #848278; border-left: 2px solid #848278; }
.txt + .txt { margin-left: 5px; }

/* data grids */
.grid { flex: 1; min-width: 0; min-height: 0; display: grid; grid-template-columns: minmax(0, 1fr) 16px; grid-template-rows: minmax(0, 1fr) 17px; border-top: 2px solid #848278; border-left: 2px solid #848278; }
.view { overflow: hidden; background: #fff; }
table { width: 100%; table-layout: fixed; border-collapse: separate; border-spacing: 0; }
th, td { height: 17px; padding: 0 1px; line-height: 14px; font-weight: normal; text-align: left; overflow: hidden; border-right: 1px solid #c0c0c0; border-bottom: 1px solid #c0c0c0; }
th { background: #ece9d8; border-color: #000; box-shadow: inset 1px 1px #fff, inset -1px -1px #aca899; }
tbody th { font-family: "Noto Sans CJK SC", sans-serif; }
.cur { background: #000; color: #fff; box-shadow: inset 0 0 0 1px #ece9d8; font: 10px/14px "Liberation Mono", monospace; }
.caret::before { content: ""; display: block; width: 1px; height: 12px; background: #000; margin-left: 1px; }
.t1 td:last-child { background: #ffff80; border: 0; box-shadow: inset 1px 1px #fff, inset 0 -1px #fff; border-bottom: 1px solid #c0c0c0; }
.t2 td:last-child, .y td { background: #ffffe1; }
.y .w { background: #fff; }
.w29 { width: 29px; } .w30 { width: 30px; } .w35 { width: 35px; } .w41 { width: 41px; } .w47 { width: 47px; }
.w53 { width: 53px; } .w65 { width: 65px; } .w77 { width: 77px; } .w101 { width: 101px; }

.vbar, .hbar { display: flex; background: #f6f5f0; }
.vbar { flex-direction: column; }
.vbar button, .hbar button, .thumb { width: 16px; height: 17px; flex: none; display: flex; align-items: center; justify-content: center; border: 1px solid #fff; border-radius: 3px; background: linear-gradient(135deg, #dbe5ff, #b5c8f8); box-shadow: inset 0 0 0 1px #b4c6f2; }
.vbar svg, .hbar svg { width: 9px; height: 9px; }
.vbar .end { margin-top: auto; }
.hbar .end { margin-left: auto; }
.down svg { transform: rotate(180deg); }
.left svg { transform: rotate(-90deg); }
.right svg { transform: rotate(90deg); }
.thumb::after { content: ""; width: 8px; height: 8px; background: repeating-linear-gradient(#fff 0 1px, #8aa4e8 1px 2px); }
.hbar .thumb { margin-left: 1px; }
.hbar .thumb::after { background: repeating-linear-gradient(90deg, #fff 0 1px, #8aa4e8 1px 2px); }

/* lower tabs */
.subtabs { flex: none; height: 28px; display: flex; align-items: center; border-bottom: 1px solid #aca899; margin: 1px 0 2px; padding-bottom: 4px; }
.subtabs > button { height: 20px; padding: 0 11px 2px 10px; border-right: 1px solid #aca899; box-shadow: 1px 0 #fff; }
.subtabs > .on { margin: 0 4px 0 2px; padding: 0 4px; background: #f8f7f0; border: 1px solid #fff; border-top: 2px solid #848278; border-left: 2px solid #848278; box-shadow: none; }
.nav { display: flex; align-items: center; margin-left: 15px; }
.n { width: 23px; display: flex; justify-content: center; }
.n svg { width: 11px; height: 11px; }
.n1 { margin-left: 2px; }
.nav .x { margin-right: 12px; }
.n1 { margin-left: 0; }
.n2 { margin-left: 4px; }
.tools { gap: 15px; margin-left: 12px; }
pre { margin: 2px 0 0 9px; font: 11px/14px "Liberation Mono", monospace; }
.lower { flex: 1; min-height: 0; display: flex; padding-left: 2px; }
.convert { width: 204px; flex: none; display: flex; flex-direction: column; padding: 0 4px 0 2px; border-right: 2px groove #fff; margin-right: 3px; }
.chead { height: 19px; flex: none; line-height: 18px; padding-left: 14px; border-right: 1px solid #aca899; }
.lower .grid { margin: 0 4px 6px 0; }

/* floating bars */
.floats { position: absolute; left: 1px; bottom: 30px; display: flex; gap: 3px; }
.bar { height: 26px; display: flex; align-items: center; padding: 2px; background: #c0c0c0; border: 2px solid #f4f2e6; border-right-color: #848278; border-bottom-color: #848278; outline: 1px solid #ece9d8; outline-offset: -1px; color: #000; }
.bar button { height: 20px; width: 20px; display: flex; align-items: center; justify-content: center; border: 1px solid #fff; border-right-color: #000; border-bottom-color: #000; }
.bar button svg { width: 14px; height: 14px; }
.ime .name { width: 71px; font-size: 16px; line-height: 18px; }
.ime .red { color: #e00; font-size: 16px; font-weight: bold; }
.ime .dots { font: bold 14px/16px "Liberation Mono", monospace; }
.sunk { flex: 1; height: 20px; border: 1px solid #fff; border-top-color: #848278; border-left-color: #848278; font-size: 16px; line-height: 18px; color: #000080; }
.bar.blank { width: 57px; }
.bar.place { width: 384px; }
.place .sunk { margin-right: 4px; font-family: "Liberation Mono", "Noto Sans CJK SC", monospace; }
.bar.place button { width: 13px; height: 13px; }
.bar.place button svg { width: 9px; height: 9px; }
.pointer { position: absolute; left: 383px; top: 291px; width: 13px; height: 22px; }

/* taskbar */
.taskbar { flex: none; height: 30px; display: flex; align-items: center; color: #fff; background: linear-gradient(#1c4fc0 0, #4a93f5 2px, #2a66e4 5px, #245edb 15px, #2562dc 26px, #1941a5 30px); }
.start { width: 97px; height: 30px; display: flex; align-items: center; gap: 6px; padding-left: 10px; border-radius: 0 10px 10px 0; background: linear-gradient(#2c7a2c 0, #6cbb6c 3px, #3c943c 7px, #379437 22px, #2a6f2a 30px); box-shadow: inset -3px 0 4px #1d5c1d; font: italic 18px/24px "Noto Sans CJK SC", sans-serif; text-shadow: 1px 1px #1b4a1b; }
.start svg { width: 20px; height: 18px; }
.quick { display: flex; gap: 8px; padding-left: 11px; width: 84px; }
.task { width: 160px; height: 24px; display: flex; align-items: center; gap: 4px; padding-left: 10px; border-radius: 2px; background: #1c4fb5; box-shadow: inset 1px 1px 2px #143a8c; }
.desk { display: flex; align-items: center; gap: 8px; color: #9cbcf4; padding-right: 5px; }
.desk i { font: 16px/16px "Liberation Serif", serif; padding-bottom: 8px; }
.tray { height: 30px; display: flex; align-items: center; gap: 3px; padding-right: 13px; margin-left: 9px; background: linear-gradient(#0d7ad8 0, #35b4f8 2px, #1490ea 6px, #1290e8 24px, #0c68c0 30px); }
.hide { margin-left: -9px; }
.hide svg { width: 18px; height: 18px; }
.tray time { margin: 0 5px 0 4px; }
```
